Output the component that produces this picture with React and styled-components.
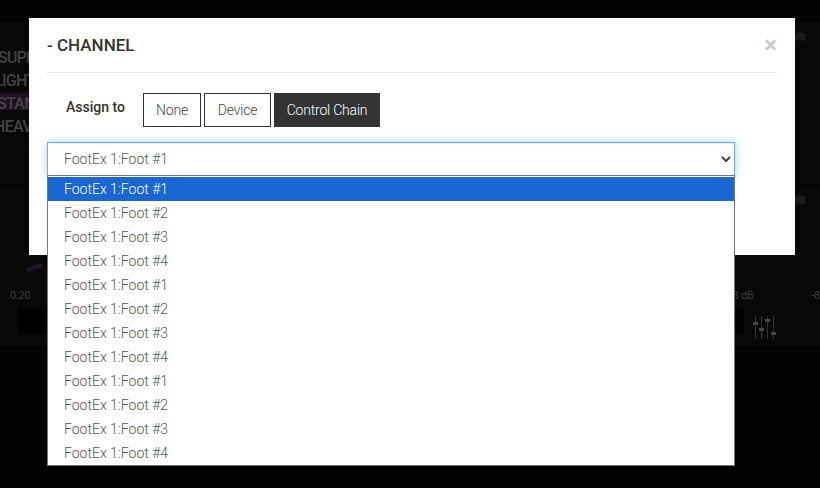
import React from "react";
import styled, { createGlobalStyle } from "styled-components";

const Global = createGlobalStyle`
  html, body { margin: 0; padding: 0; background: #000; }
  body { width: 820px; height: 488px; overflow: hidden; font-family: "Roboto", "Liberation Sans", sans-serif; }
  * { box-sizing: border-box; }
`;

const Stage = styled.div`
  position: relative;
  width: 820px;
  height: 488px;
  background: #020202;
  overflow: hidden;
`;
const Workspace = styled.div`
  display: flex;
  flex-direction: column;
  padding-top: 22px;
  height: 346px;
`;
const TopPanel = styled.div`
  height: 163px;
  background: #080808;
  border-bottom: 1px solid #000;
  display: flex;
  justify-content: space-between;
`;
const PresetList = styled.div`
  padding-top: 25px;
  display: flex;
  flex-direction: column;
  gap: 6px;
`;
const PresetRow = styled.div`
  height: 17px;
  width: 60px;
  line-height: 21px;
  font-size: 16px;
  font-weight: 500;
  letter-spacing: -0.7px;
  text-indent: ${p => p.$indent}px;
  color: #444;
  white-space: nowrap;
  overflow: hidden;
  background: ${p => (p.$active ? "#1f0f24" : "transparent")};
`;
const CameraIcon = styled.svg`
  display: block;
  width: 12px;
  height: 12px;
  margin: 8px 14px 0 0;
`;
const BottomPanel = styled.div`
  flex: 1;
  background: #080808;
  display: flex;
  flex-direction: column;
  justify-content: space-between;
  padding-bottom: 12px;
`;
const PanelHead = styled.div`
  display: flex;
  justify-content: flex-end;
`;
const KnobArc = styled.svg`
  display: block;
  width: 20px;
  height: 10px;
  margin: 0 0 17px 27px;
`;
const MeterRow = styled.div`
  display: flex;
  align-items: center;
  justify-content: space-between;
  height: 12px;
  margin-bottom: 7px;
  font-size: 11px;
  letter-spacing: -0.3px;
  color: #3c3c3c;
  padding-left: 10px;
`;
const DbLabels = styled.div`
  display: flex;
  gap: 58px;
`;
const ControlRow = styled.div`
  display: flex;
  align-items: flex-start;
  height: 26px;
  padding: 0 43px 0 18px;
`;
const BlackSlot = styled.div`
  width: 30px;
  height: 26px;
  background: #000;
  margin-left: ${p => (p.$right ? "auto" : "0")};
`;
const SliderIcon = styled.svg`
  display: block;
  margin: 8px 0 0 9px;
  width: 24px;
  height: 24px;
  flex: none;
`;

const Overlay = styled.div`
  position: absolute;
  inset: 0;
  padding: 18px 25px 0 29px;
`;
const Modal = styled.div`
  height: 237px;
  background: #fff;
  padding: 0 18px 0 17px;
`;
const ModalHeader = styled.div`
  display: flex;
  align-items: center;
  justify-content: space-between;
  height: 55px;
  border-bottom: 1px solid #eee;
  padding: 0 0 0 1px;
`;
const Title = styled.h4`
  margin: 0;
  font-size: 17px;
  line-height: 20px;
  font-weight: 500;
  color: #333;
`;
const Close = styled.span`
  font-size: 24px;
  font-weight: 700;
  line-height: 1;
  color: #ccc;
`;
const AssignRow = styled.div`
  display: flex;
  align-items: flex-start;
  padding: 20px 0 0 20px;
`;
const AssignLabel = styled.label`
  width: 77px;
  font-size: 14px;
  font-weight: 500;
  color: #333;
  line-height: 29px;
`;
const Buttons = styled.div`
  display: flex;
  gap: 3px;
`;
const ChoiceButton = styled.button`
  width: ${p => p.$width}px;
  height: 34px;
  padding: 0;
  font: 300 14px "Roboto", "Liberation Sans", sans-serif;
  letter-spacing: -0.2px;
  border: 1px solid #333;
  background: ${p => (p.$active ? "#333" : "#fff")};
  color: ${p => (p.$active ? "#fff" : "#444")};
`;
const SelectBox = styled.div`
  position: relative;
  margin: 15px 1px 0 1px;
  height: 34px;
  width: 688px;
  border: 1px solid #66afe9;
  box-shadow: inset 0 1px 1px rgba(0,0,0,.075), 0 0 8px rgba(102,175,233,.6);
  display: flex;
  align-items: center;
  justify-content: space-between;
  padding: 0 3px 0 16px;
  font-size: 14px;
  font-weight: 300;
  color: #555;
  background: #fff;
`;
const OptionList = styled.ul`
  position: absolute;
  top: 32px;
  left: -1px;
  width: 688px;
  margin: 0;
  padding: 1px 0 0;
  list-style: none;
  background: #fff;
  border: 1px solid #767676;
  z-index: 2;
`;
const Option = styled.li`
  height: 24px;
  line-height: 24px;
  padding-left: 16px;
  font-size: 14px;
  font-weight: 300;
  color: ${p => (p.$selected ? "#fff" : "#555")};
  background: ${p => (p.$selected ? "#1967d2" : "#fff")};
`;

const options = [1, 2, 3, 4, 1, 2, 3, 4, 1, 2, 3, 4];

const Camera = () => (
  <CameraIcon viewBox="0 0 12 12" fill="#1a1a1a">
    <path d="M1 3h2.500l1-1.500h3L8.500 3H11v7.500H1z" />
  </CameraIcon>
);

export default function App() {
  return (
    <Stage>
      <Global />
      <Workspace>
        <TopPanel>
          <PresetList>
            <PresetRow $indent={-2}>SUPER</PresetRow>
            <PresetRow $indent={-6}>LIGHT</PresetRow>
            <PresetRow $indent={-3} $active>STANDARD</PresetRow>
            <PresetRow $indent={-6}>HEAVY</PresetRow>
          </PresetList>
          <Camera />
        </TopPanel>
        <BottomPanel>
          <PanelHead>
            <Camera />
          </PanelHead>
          <div>
            <KnobArc viewBox="0 0 20 10" stroke="#24102b" strokeWidth="4" fill="none">
              <path d="M0 8l15-5" />
            </KnobArc>
            <MeterRow>
              <span>0.20</span>
              <DbLabels>
                <span>-8 dB</span>
                <span>-8</span>
              </DbLabels>
            </MeterRow>
            <ControlRow>
              <BlackSlot />
              <BlackSlot $right />
              <SliderIcon viewBox="0 0 24 24" fill="#454545">
                <rect x="2" y="0" width="1" height="23" fill="#333" />
                <rect x="8" y="0" width="1" height="23" fill="#333" />
                <rect x="14" y="0" width="1" height="23" fill="#333" />
                <rect x="20" y="0" width="1" height="23" fill="#333" />
                <rect x="0" y="6" width="5" height="3" />
                <rect x="6" y="12" width="5" height="3" />
                <rect x="12" y="3" width="5" height="3" />
                <rect x="18" y="16" width="5" height="3" />
              </SliderIcon>
            </ControlRow>
          </div>
        </BottomPanel>
      </Workspace>
      <Overlay>
        <Modal>
          <ModalHeader>
            <Title>- CHANNEL</Title>
            <Close>×</Close>
          </ModalHeader>
          <AssignRow>
            <AssignLabel>Assign to</AssignLabel>
            <Buttons>
              <ChoiceButton $width={58}>None</ChoiceButton>
              <ChoiceButton $width={67}>Device</ChoiceButton>
              <ChoiceButton $width={106} $active>Control Chain</ChoiceButton>
            </Buttons>
          </AssignRow>
          <SelectBox>
            FootEx 1:Foot #1
            <svg width="10" height="7" viewBox="0 0 10 7" fill="none" stroke="#444" strokeWidth="2">
              <path d="M1 1l4 4 4-4" />
            </svg>
            <OptionList>
              {options.map((n, i) => (
                <Option key={i} $selected={i === 0}>FootEx 1:Foot #{n}</Option>
              ))}
            </OptionList>
          </SelectBox>
        </Modal>
      </Overlay>
    </Stage>
  );
}
